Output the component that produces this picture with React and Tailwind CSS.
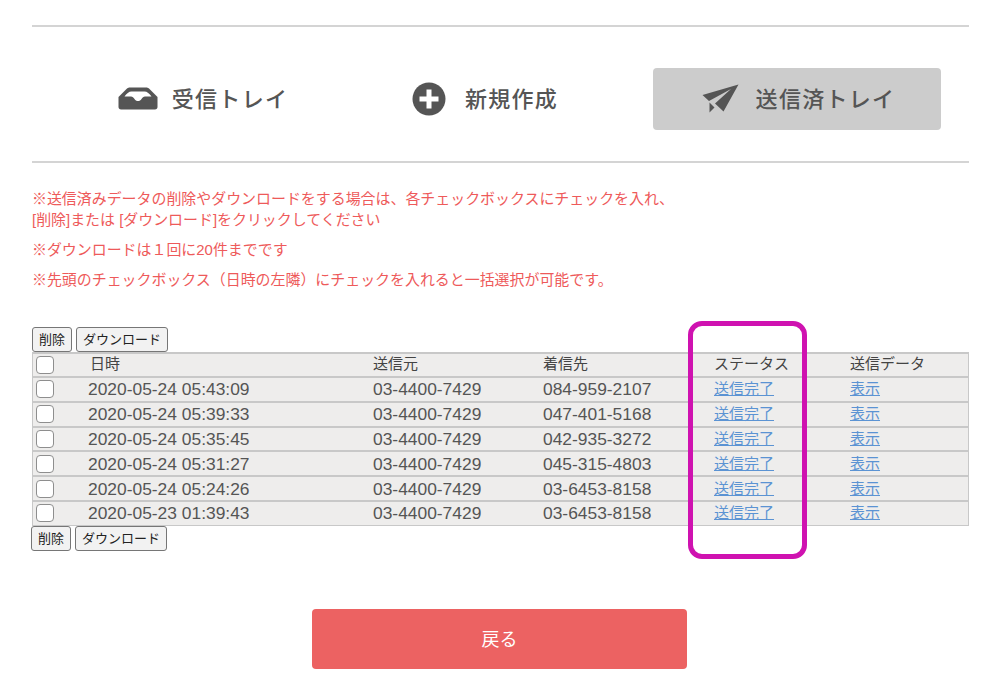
import React from 'react';

const rows = [
  { date: '2020-05-24 05:43:09', to: '084-959-2107' },
  { date: '2020-05-24 05:39:33', to: '047-401-5168' },
  { date: '2020-05-24 05:35:45', to: '042-935-3272' },
  { date: '2020-05-24 05:31:27', to: '045-315-4803' },
  { date: '2020-05-24 05:24:26', to: '03-6453-8158' },
  { date: '2020-05-23 01:39:43', to: '03-6453-8158' },
];

const font = "font-['Liberation_Sans','Noto_Sans_CJK_JP',sans-serif]";
const gridCols = 'grid grid-cols-[56px_284px_170px_171px_136px_1fr]';

const Check = () => (
  <span className="block w-[18px] h-[18px] rounded-[4px] border border-[#8e8e8e] bg-white" />
);

const ActionButtons = ({ className }) => (
  <div className={`flex gap-1 ${className}`}>
    <button className="h-[25px] w-[40px] rounded-[3px] border border-[#767676] bg-[#f2f2f2] text-[13px] text-[#222]">削除</button>
    <button className="h-[25px] w-[92px] rounded-[3px] border border-[#767676] bg-[#f2f2f2] text-[13px] text-[#222]">ダウンロード</button>
  </div>
);

const InboxIcon = () => (
  <svg width="40" height="23" viewBox="0 0 40 23" fill="#555">
    <path d="M12 0.500h16c1.500 0 2.500.5 3.500 1.500L39.500 10v10c0 1.500-1 2.500-2.500 2.500H3c-1.500 0-2.500-1-2.500-2.500V10L8.500 2c1-1 2-1.500 3.500-1.500z" />
    <path d="M6.500 9.500c2-3 4.500-5 7-5h13c2.500 0 5 2 7 5h-6.500c-1.500 0-2.500 1-3.500 2.500-1 1.500-2 2-3.500 2s-2.500-.5-3.500-2c-1-1.500-2-2.500-3.500-2.500z" fill="#fff" />
  </svg>
);

const PlusIcon = () => (
  <svg width="34" height="34" viewBox="0 0 34 34">
    <circle cx="17" cy="17" r="16.500" fill="#555" />
    <path d="M14.500 7.500h5v7h7v5h-7v7h-5v-7h-7v-5h7z" fill="#fff" />
  </svg>
);

const PlaneIcon = () => (
  <svg width="37" height="29" viewBox="0 0 37 29" fill="#555">
    <path d="M36.500 0.500 0.500 11l6.500 6L29 5 13 19.500l8.500 8z" />
    <path d="M7.500 18.500v10l5-5z" />
  </svg>
);

const Tab = ({ icon, label, gap, active, className }) => (
  <div className={`flex items-center justify-center rounded-[4px] font-medium text-[22px] tracking-[1.3px] text-[#555] ${active ? 'bg-[#cccccc]' : ''} ${gap} ${className}`}>
    {icon}
    <span className="pt-[2px]">{label}</span>
  </div>
);

const App = () => {
  return (
    <div className={`relative w-[1000px] h-[700px] overflow-hidden bg-white pl-8 pr-[31px] pt-[25px] ${font}`}>
      <hr className="border-0 h-[2px] bg-[#d4d4d4]" />

      <div className="flex items-center h-[134px] pt-[9px]">
        <Tab icon={<InboxIcon />} label="受信トレイ" gap="gap-[14px]" className="w-[342px] h-[62px]" />
        <Tab icon={<PlusIcon />} label="新規作成" gap="gap-[19px]" className="w-[222px] h-[62px]" />
        <Tab icon={<PlaneIcon />} label="送信済トレイ" gap="gap-[17px]" active className="w-[288px] h-[62px] ml-[57px] pl-[3px]" />
      </div>

      <hr className="border-0 h-[2px] bg-[#d4d4d4]" />

      <div className="mt-[25px] text-[14.950px] leading-[21px] text-[#ee5a5a]">
        <p>※送信済みデータの削除やダウンロードをする場合は、各チェックボックスにチェックを入れ、<br />[削除]または [ダウンロード]をクリックしてください</p>
        <p className="mt-[9px]">※ダウンロードは１回に20件までです</p>
        <p className="mt-[9px]">※先頭のチェックボックス（日時の左隣）にチェックを入れると一括選択が可能です。</p>
      </div>

      <ActionButtons className="mt-[37px]" />

      <div className="text-[15px] leading-[20px] text-[#555] bg-[#eeedec] border-x border-[#c8c8c8] border-b">
        <div className={`${gridCols} h-[26px] items-center border-t-2 border-b-2 border-[#c8c8c8] text-[#444]`}>
          <span className="pl-[3px]"><Check /></span>
          <span className="pl-[1px] pb-[2px]">日時</span>
          <span className="pb-[2px]">送信元</span>
          <span className="pb-[2px]">着信先</span>
          <span className="pb-[2px]">ステータス</span>
          <span className="pb-[2px]">送信データ</span>
        </div>
        {rows.map((row, i) => (
          <div key={row.date} className={`${gridCols} items-center ${i < rows.length - 1 ? 'h-[24.800px] border-b-2 border-[#c8c8c8]' : 'h-[22.800px]'}`}>
            <span className="pl-[3px]"><Check /></span>
            <span className="-ml-[1px] text-[17.400px]">{row.date}</span>
            <span className="text-[17.400px]">03-4400-7429</span>
            <span className="text-[17.400px]">{row.to}</span>
            <a href="#" className="text-[#5b93d3] underline">送信完了</a>
            <a href="#" className="text-[#5b93d3] underline">表示</a>
          </div>
        ))}
      </div>

      <ActionButtons className="-ml-[1px]" />

      <button className="block ml-[280px] mt-[58px] w-[375px] h-[60px] pt-[3px] rounded-[4px] bg-[#ec6262] text-white text-[18px]">戻る</button>

      {/* highlight drawn over the table */}
      <div className="absolute left-[688px] top-[321px] w-[119px] h-[238px] rounded-[14px] border-[5px] border-[#cf12b0]" />
    </div>
  );
};

export default App;
